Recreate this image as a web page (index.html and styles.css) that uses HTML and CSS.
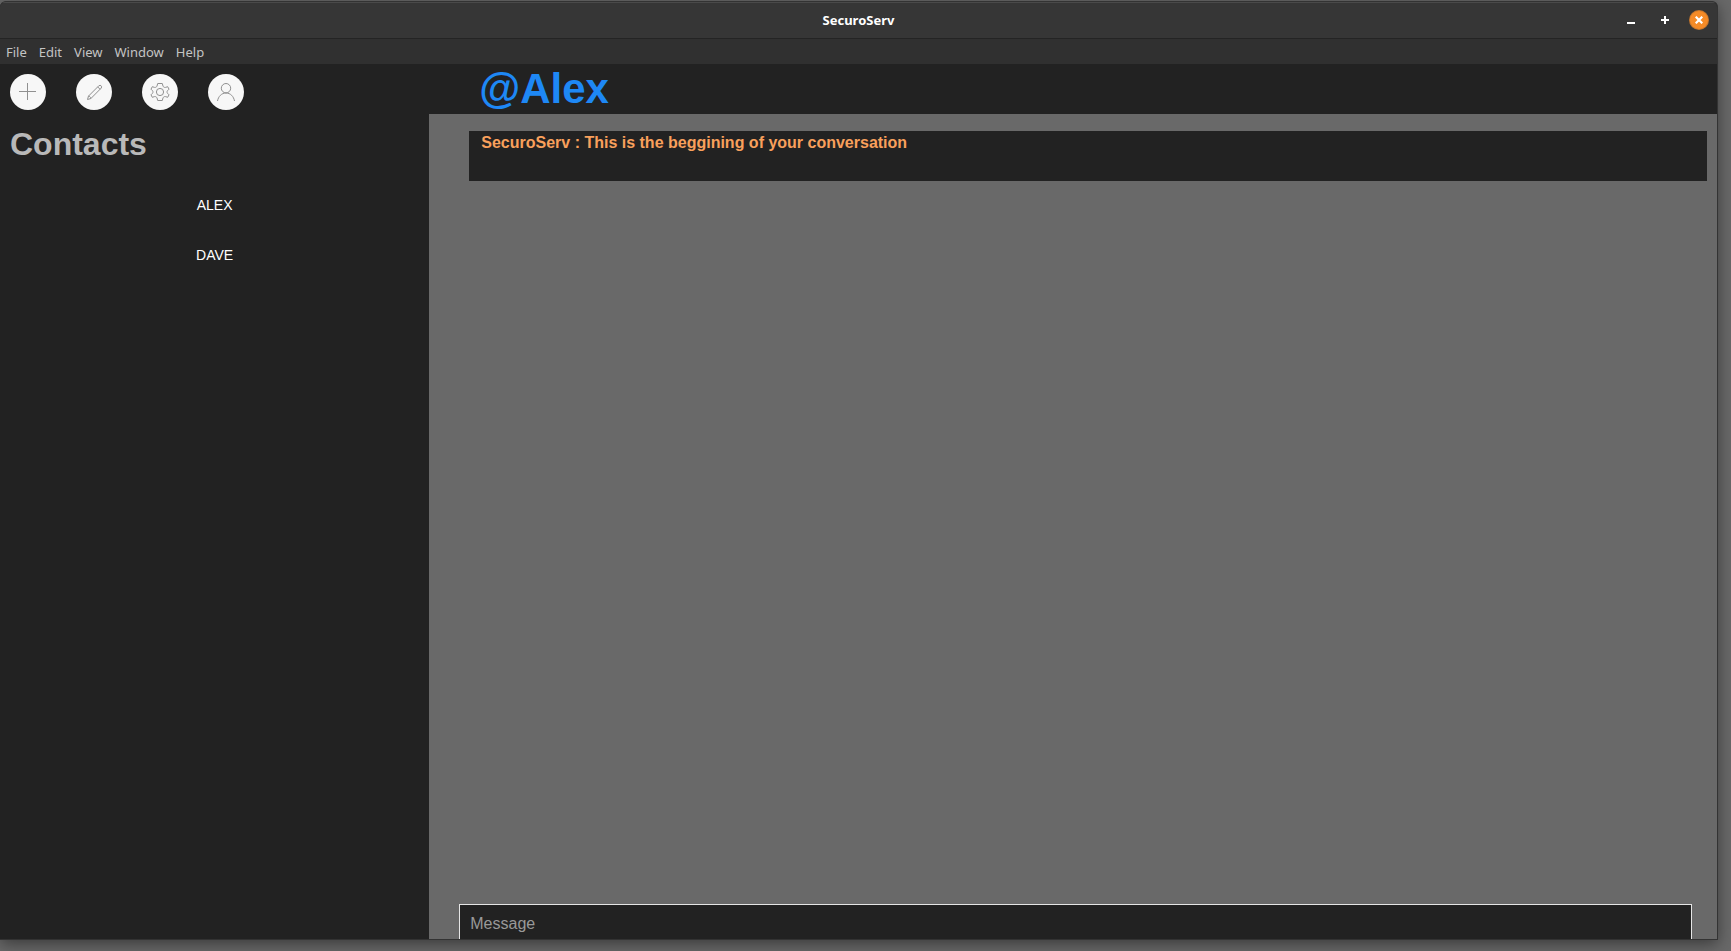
FILE: index.html
```html
<!DOCTYPE html>
<html lang="en">
<head>
<meta charset="utf-8">
<title>SecuroServ</title>
<link rel="stylesheet" href="styles.css">
</head>
<body>
<div class="window">
  <header class="titlebar">
    <span class="title">SecuroServ</span>
    <div class="controls">
      <button class="control" type="button" aria-label="Minimize"><svg width="8" height="8" viewBox="0 0 8 8"><path d="M0 7h8" stroke="#fff" stroke-width="2"/></svg></button>
      <button class="control" type="button" aria-label="Maximize"><svg width="8" height="8" viewBox="0 0 8 8"><path d="M0 4h8M4 0v8" stroke="#fff" stroke-width="2"/></svg></button>
      <button class="control close" type="button" aria-label="Close"><svg width="8" height="8" viewBox="0 0 8 8"><path d="M.7.7l6.6 6.6M7.3.7L.7 7.3" stroke="#fff" stroke-width="2.2"/></svg></button>
    </div>
  </header>
  <nav class="menubar">
    <button type="button">File</button>
    <button type="button">Edit</button>
    <button type="button">View</button>
    <button type="button">Window</button>
    <button type="button">Help</button>
  </nav>
  <div class="app">
    <aside class="sidebar">
      <div class="tools">
        <button class="tool" type="button" aria-label="Add contact"><svg viewBox="0 0 36 36"><path d="M9 17.5h17M17.500 9v17"/></svg></button>
        <button class="tool" type="button" aria-label="Edit"><svg viewBox="0 0 36 36"><path d="M11.500 25.500l1-3.400L22.900 11.700c1.600-1.200 3.500.7 2.400 2.300L14.900 24.500zM21.700 12.900l2.400 2.400M12.500 22.100c1.200.2 2.100 1.100 2.400 2.400"/></svg></button>
        <button class="tool" type="button" aria-label="Settings"><svg viewBox="0 0 36 36"><circle cx="18" cy="18" r="3.600"/><path d="M15.700 9.500h4.600l.7 2.600q.2.600.8.900l.5.300q.6.300 1.200.1l2.200-.7 1.300 2.500-1.500 1.500q-.4.400-.4 1v.6q0 .6.400 1l1.500 1.500-1.300 2.500-2.200-.7q-.6-.2-1.200.1l-.5.300q-.6.300-.8.900l-.7 2.600h-4.600l-.7-2.600q-.2-.6-.8-.9l-.5-.3q-.6-.3-1.200-.1l-2.200.7L9 20.800l1.500-1.500q.4-.4.400-1v-.6q0-.6-.4-1L9 15.200l1.300-2.500 2.200.7q.6.200 1.200-.1l.5-.3q.6-.3.800-.9z"/></svg></button>
        <button class="tool" type="button" aria-label="Profile"><svg viewBox="0 0 36 36"><circle cx="18" cy="14.200" r="4.700"/><path d="M9.500 27c.8-4.500 4-8 8.500-8s7.700 3.500 8.500 8"/></svg></button>
      </div>
      <h1 class="heading">Contacts</h1>
      <div class="contacts">
        <button class="contact" type="button">ALEX</button>
        <button class="contact" type="button">DAVE</button>
      </div>
    </aside>
    <main class="chat">
      <h2 class="peer">@Alex</h2>
      <div class="log">
        <p class="message">SecuroServ : This is the beggining of your conversation</p>
      </div>
      <form class="composer">
        <input class="entry" type="text" placeholder="Message" aria-label="Message">
      </form>
    </main>
  </div>
</div>
</body>
</html>
```
FILE: styles.css
```css
* { box-sizing: border-box; }

body {
  margin: 0;
  height: 100vh;
  padding: 1px 13px 11px 0;
  overflow: hidden;
  background: #696969;
  font-family: "Liberation Sans", Arial, sans-serif;
}

button {
  border: 0;
  padding: 0;
  background: none;
  color: inherit;
  font: inherit;
}

.window {
  display: flex;
  flex-direction: column;
  height: 100%;
  overflow: hidden;
  border: solid #333;
  border-width: 1px 1px 1px 0;
  border-radius: 6px 6px 0 0;
  background: #222;
  box-shadow: 0 4px 16px rgba(0, 0, 0, .45);
}

.titlebar {
  position: relative;
  display: flex;
  flex: none;
  align-items: center;
  justify-content: center;
  height: 37px;
  padding-bottom: 2px;
  border-top: 1px solid #4a4a4a;
  border-bottom: 1px solid #242424;
  background: #363636;
  color: #fff;
  font: bold 13px/16px "Noto Sans", sans-serif;
}

.controls {
  position: absolute;
  right: 9px;
  display: flex;
  gap: 16px;
}

.control {
  display: flex;
  align-items: center;
  justify-content: center;
  width: 18px;
  height: 18px;
  border-radius: 50%;
}

.close {
  background: #f58b27;
  box-shadow: 0 0 0 1px #c9772b;
}

.menubar {
  display: flex;
  flex: none;
  gap: 12px;
  height: 25px;
  padding: 0 6px;
  background: #303030;
  color: #c4c4c4;
  font: 13px/16px "Noto Sans", sans-serif;
}

.app {
  display: grid;
  flex: 1;
  grid-template-columns: 1fr 3fr;
  min-height: 0;
}

.sidebar {
  background: #222;
}

.tools {
  display: flex;
  gap: 30px;
  padding: 10px 10px 0;
}

.tool {
  width: 36px;
  height: 36px;
  border-radius: 50%;
  background: #f7f7f7;
}

.tool svg {
  display: block;
  fill: none;
  stroke: #909090;
  stroke-width: 1;
}

.heading {
  margin: 15px 10px 17px;
  color: #b9b9b9;
  font-size: 32px;
  line-height: 38px;
}

.contacts {
  display: flex;
  flex-direction: column;
}

.contact {
  height: 50px;
  color: #fff;
  font-size: 14px;
}

.chat {
  display: flex;
  flex-direction: column;
  min-height: 0;
  overflow: hidden;
  background: #696969;
}

.peer {
  flex: none;
  height: 50px;
  margin: 0;
  padding-left: 50px;
  background: #222;
  color: #1e88f5;
  font-size: 42px;
  line-height: 50px;
}

.log {
  flex: 1;
  padding: 17px 10px 0 40px;
}

.message {
  height: 50px;
  margin: 0;
  padding: 2px 12px;
  background: #222;
  color: #f9a05c;
  font-size: 16px;
  font-weight: bold;
  line-height: 20px;
}

.composer {
  flex: none;
  height: 35px;
  padding: 0 25px 0 30px;
}

.entry {
  display: block;
  width: 100%;
  height: 40px;
  padding: 0 10px;
  border: 1px solid #e6e6e6;
  border-radius: 0;
  outline: 0;
  background: #222;
  color: #fff;
  font: 16px/18px "Liberation Sans", Arial, sans-serif;
}

.entry::placeholder {
  color: #999;
}
```
